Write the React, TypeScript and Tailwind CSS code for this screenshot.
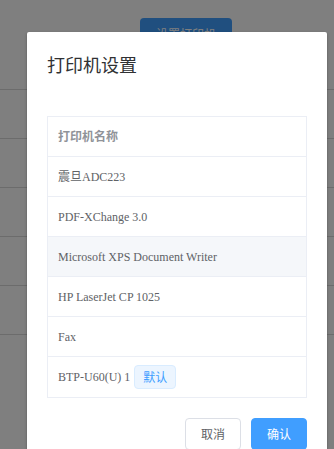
const printers = [
  { name: '震旦ADC223' },
  { name: 'PDF-XChange 3.0' },
  { name: 'Microsoft XPS Document Writer', hover: true },
  { name: 'HP LaserJet CP 1025' },
  { name: 'Fax' },
  { name: 'BTP-U60(U) 1', isDefault: true },
];

const cjk = "font-['Noto_Sans_CJK_SC',sans-serif]";
const cellFont = "font-['Liberation_Serif','Noto_Sans_CJK_SC',serif]";

export default function App() {
  return (
    <div className="relative h-[449px] w-[334px] overflow-hidden bg-white">
      {/* page behind the dialog */}
      <div className="flex flex-col">
        <div className="flex h-[89px] justify-center pl-[38px] pt-[18px]">
          <button className={`h-[32px] w-[92px] rounded-[4px] bg-[#409eff] text-xs text-white ${cjk}`}>
            设置打印机
          </button>
        </div>
        {[0, 1, 2, 3, 4, 5].map((i) => (
          <div key={i} className="h-[49px] border-t border-[#d8d8d8]" />
        ))}
      </div>

      {/* overlay */}
      <div className="absolute inset-0 bg-black/50">
        <div className="ml-[27px] mt-[32px] w-[300px] rounded-[2px] bg-white shadow-[0_1px_3px_rgba(0,0,0,0.3)]">
          <div className="px-5 pb-[10px] pt-5">
            <h2 className={`text-[18px] leading-6 text-[#303133] ${cjk}`}>打印机设置</h2>
          </div>
          <div className="px-5 pt-[30px]">
            <div className="border border-[#ebeef5]">
              <div className={`flex h-[39px] items-center pl-[10px] text-xs font-bold text-[#909399] ${cellFont}`}>
                打印机名称
              </div>
              {printers.map((p, i) => (
                <div
                  key={p.name}
                  className={`flex items-center gap-[4px] border-t border-[#ebeef5] pl-[10px] text-xs text-[#606266] ${cellFont} ${
                    i === printers.length - 1 ? 'h-[41px]' : 'h-[40px]'
                  } ${p.hover ? 'bg-[#f5f7fa]' : ''}`}
                >
                  <span>{p.name}</span>
                  {p.isDefault && (
                    <span className={`flex h-[24px] w-[42px] items-center justify-center rounded-[4px] border border-[#d9ecff] bg-[#ecf5ff] text-xs text-[#409eff] ${cjk}`}>
                      默认
                    </span>
                  )}
                </div>
              ))}
            </div>
          </div>
          <div className="flex justify-end gap-[10px] px-5 pb-5 pt-[20px]">
            <button className={`h-[32px] w-[56px] rounded-[4px] border border-[#dcdfe6] bg-white text-xs text-[#606266] ${cjk}`}>
              取消
            </button>
            <button className={`h-[32px] w-[56px] rounded-[4px] border border-[#409eff] bg-[#409eff] text-xs text-white ${cjk}`}>
              确认
            </button>
          </div>
        </div>
      </div>
    </div>
  );
}
